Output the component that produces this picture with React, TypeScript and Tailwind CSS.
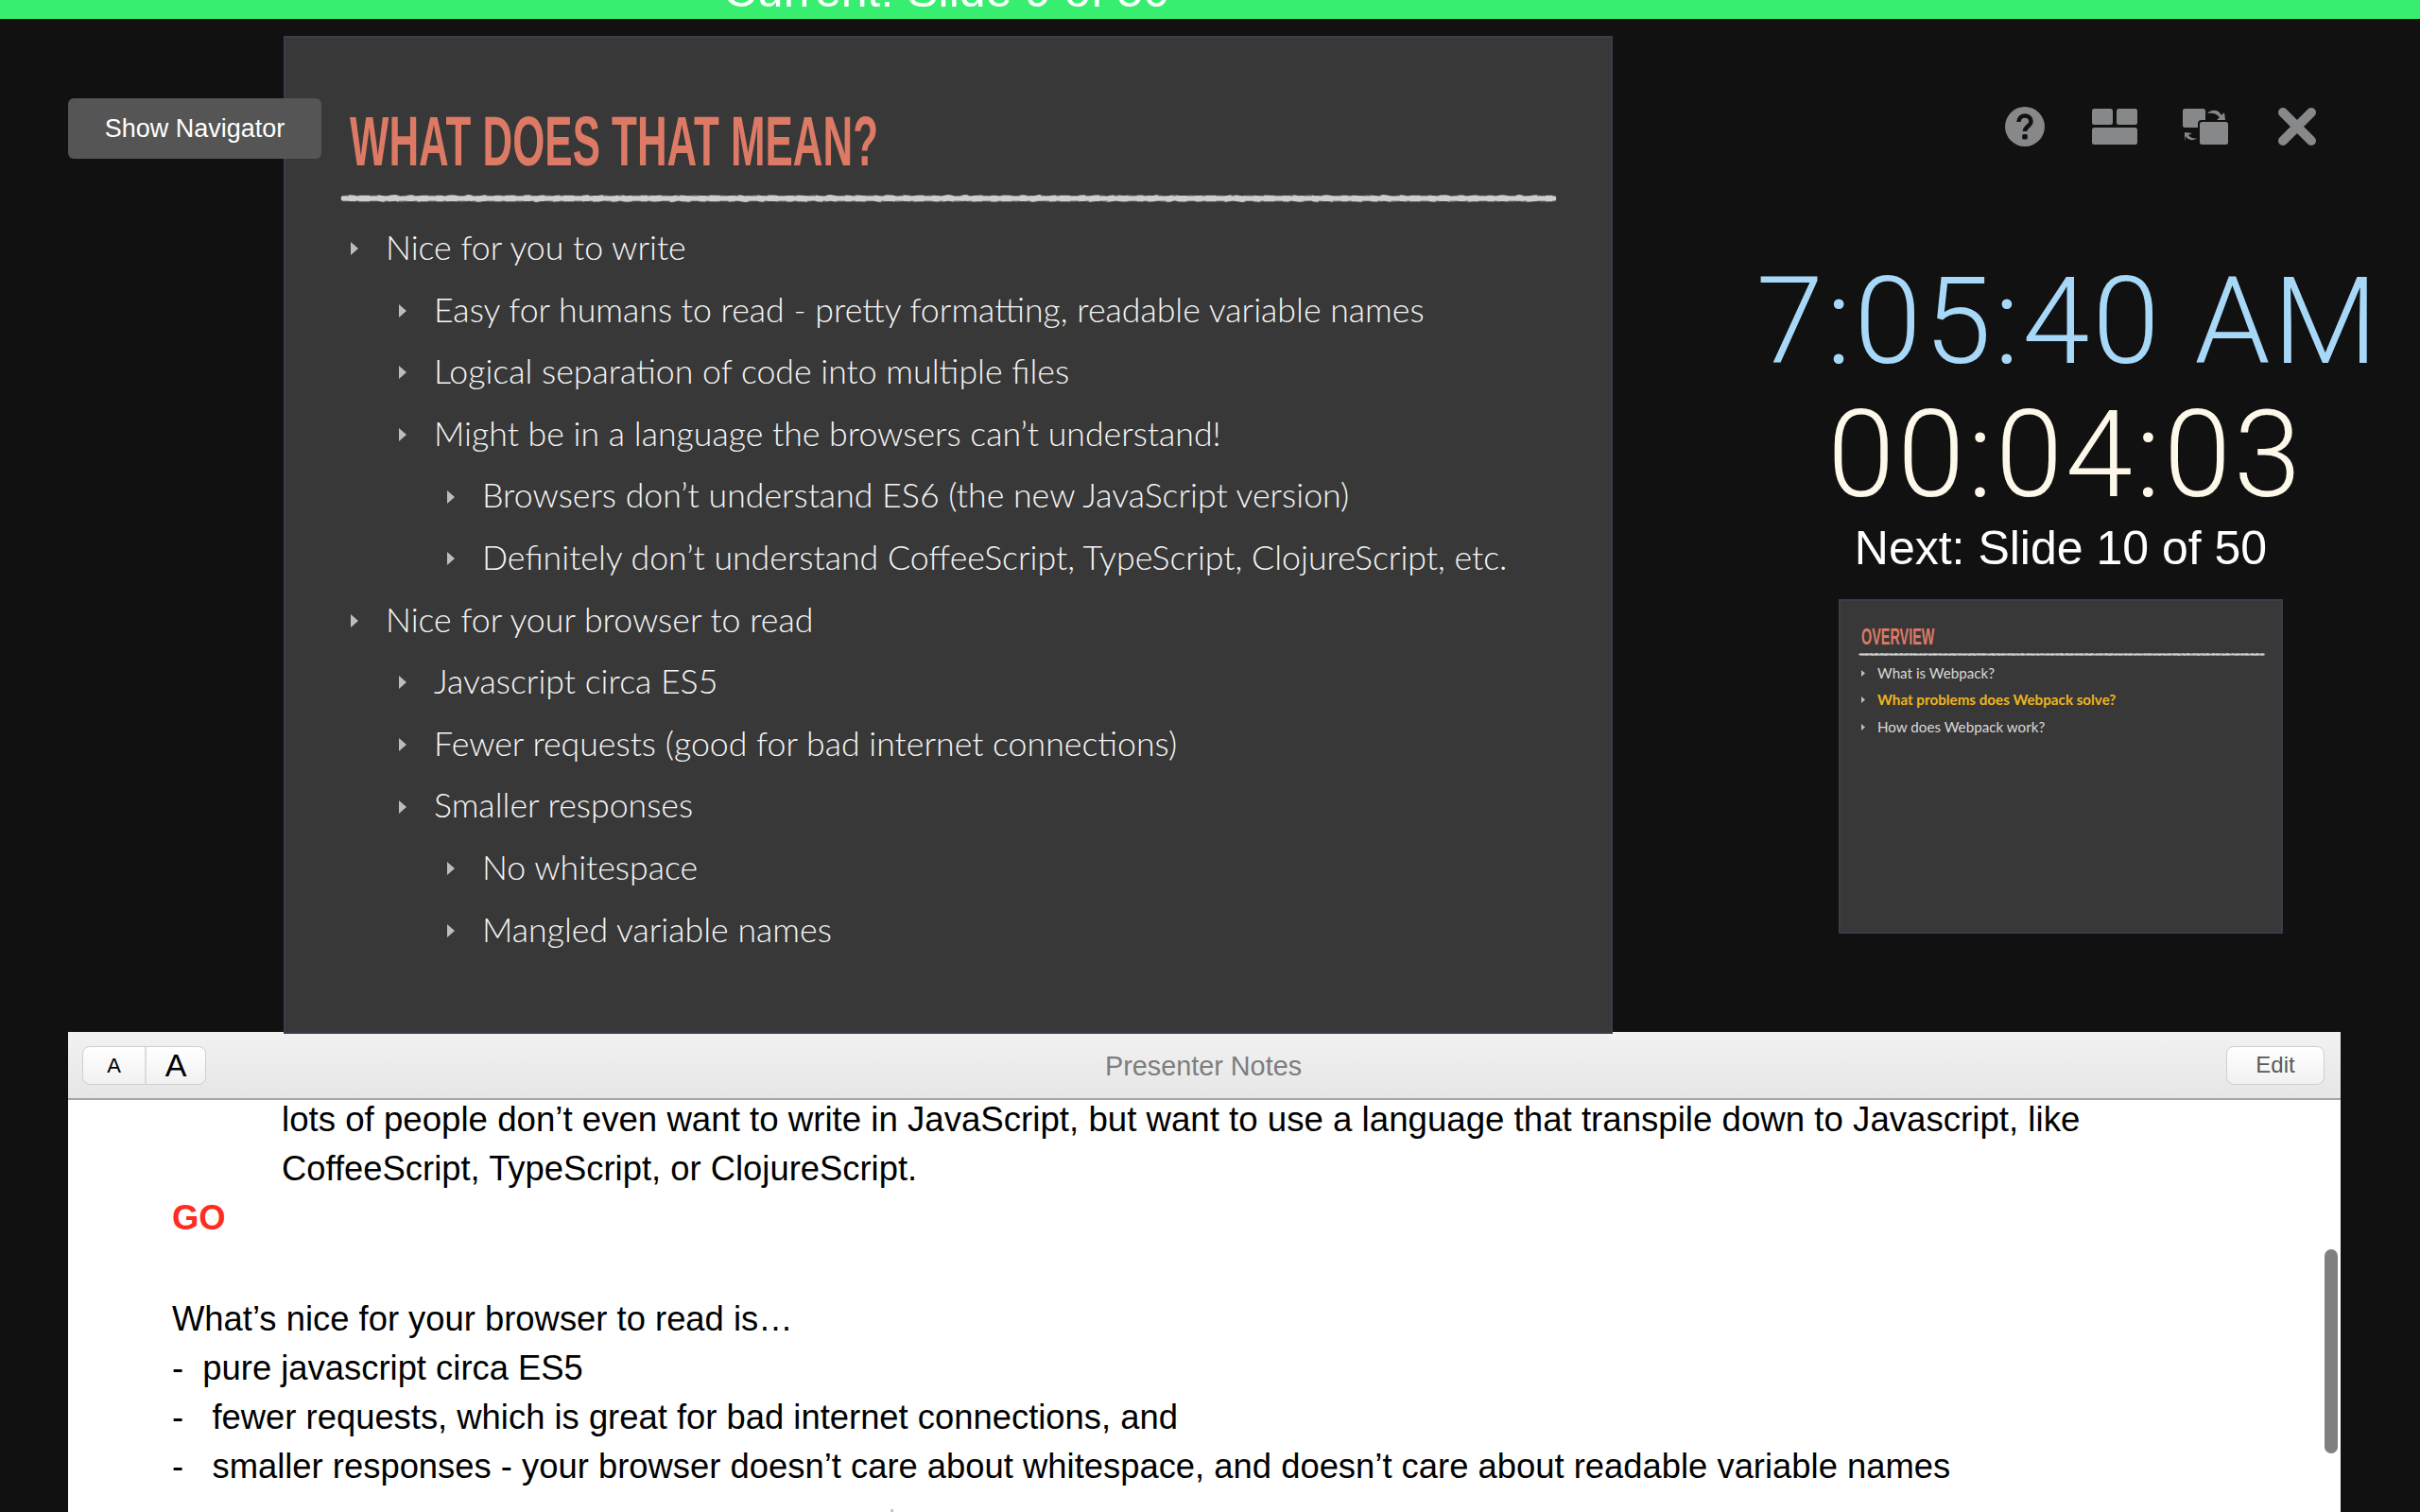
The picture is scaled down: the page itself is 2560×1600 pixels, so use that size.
const bullets: { text: string; level: number }[] = [
  { text: "Nice for you to write", level: 0 },
  { text: "Easy for humans to read - pretty formatting, readable variable names", level: 1 },
  { text: "Logical separation of code into multiple files", level: 1 },
  { text: "Might be in a language the browsers can’t understand!", level: 1 },
  { text: "Browsers don’t understand ES6 (the new JavaScript version)", level: 2 },
  { text: "Definitely don’t understand CoffeeScript, TypeScript, ClojureScript, etc.", level: 2 },
  { text: "Nice for your browser to read", level: 0 },
  { text: "Javascript circa ES5", level: 1 },
  { text: "Fewer requests (good for bad internet connections)", level: 1 },
  { text: "Smaller responses", level: 1 },
  { text: "No whitespace", level: 2 },
  { text: "Mangled variable names", level: 2 },
];

const indent = ["pl-0", "pl-[51px]", "pl-[102px]"];

const Arrow = ({ small }: { small?: boolean }) => (
  <svg width={small ? 4 : 8} height={small ? 7 : 14} viewBox="0 0 8 14" className={small ? "shrink-0" : "shrink-0 mt-[3px]"}>
    <path d="M0 0 L8 7 L0 14 Z" fill="#bdbdbd" />
  </svg>
);

// hand drawn chalk stroke, jitter comes from a couple of sines
const chalkPath = (() => {
  let d = "M4 4";
  for (let x = 10; x < 1290; x += 6) {
    const y = 4 + Math.sin(x * 1.7) * 0.4 + Math.sin(x * 0.31) * 0.3;
    d += ` L${x} ${y.toFixed(2)}`;
  }
  return d;
})();

const ChalkLine = ({ width, height }: { width: number; height: number }) => (
  <svg width={width} height={height} viewBox="0 0 1292 8" preserveAspectRatio="none" className="block">
    <path d={chalkPath} fill="none" stroke="#cdcdcd" strokeWidth="6.5" strokeLinecap="round" />
    <path d="M0 0.8 H1292 M0 7.2 H1292" stroke="#383838" strokeWidth="1" strokeDasharray="9 7 4 11" />
  </svg>
);

const HelpIcon = () => (
  <svg width="42" height="42" viewBox="0 0 42 42">
    <circle cx="21" cy="21" r="21" fill="#87888a" />
    <path d="M14.5 16 C14.5 7.5 27.5 7.5 27.5 15.5 C27.5 20.5 21 20.5 21 26" fill="none" stroke="#111" strokeWidth="4.5" />
    <rect x="18.2" y="29" width="5.6" height="5.6" rx="1.5" fill="#111" />
  </svg>
);

const LayoutIcon = () => (
  <svg width="48" height="38" viewBox="0 0 48 38" fill="#87888a">
    <rect x="0" y="0" width="22" height="17" rx="2.5" />
    <rect x="26" y="0" width="22" height="17" rx="2.5" />
    <rect x="0" y="20" width="48" height="18" rx="2.5" />
  </svg>
);

const SwapIcon = () => (
  <svg width="48" height="38" viewBox="0 0 48 38" fill="#87888a">
    <rect x="0" y="0" width="24" height="20" rx="2.5" />
    <rect x="16" y="12" width="32" height="27" rx="4" fill="#111" />
    <rect x="18" y="14" width="30" height="24" rx="2.5" />
    <path d="M26 5 C31 0 38 1 41 7 L44 4 L45 12 L36 12 L39 9 C36 5 31 4 26 5 Z" />
    <path d="M15 31 C11 35 5 33 3 29 L2 35 L2 25 L10 26 L6 28 C8 31 12 32 15 31 Z" />
  </svg>
);

const CloseIcon = () => (
  <svg width="40" height="40" viewBox="0 0 40 40">
    <path d="M5 5 L35 35 M35 5 L5 35" stroke="#87888a" strokeWidth="10" strokeLinecap="round" />
  </svg>
);

const Slide = () => (
  <div className="relative z-10 w-[1406px] h-[1056px] shrink-0 bg-[#383838] border-2 border-[#3a3d4a] pl-[68px]">
    <div className="h-[84px] mt-[68px] font-['Liberation_Sans',sans-serif] font-bold text-[74px] leading-[84px] text-[#dd7a66] whitespace-nowrap origin-left scale-x-[0.593]">
      WHAT DOES THAT MEAN?
    </div>
    <div className="-ml-[10px] mt-[14px]">
      <ChalkLine width={1287} height={8} />
    </div>
    <ul className="mt-[15px] ml-[1px] font-['Lato',sans-serif] font-light text-[35.7px] text-[#f6f6f6]">
      {bullets.map((b) => (
        <li key={b.text} className={`h-[65.6px] flex items-center whitespace-nowrap ${indent[b.level]}`}>
          <Arrow />
          <span className="ml-[29px]">{b.text}</span>
        </li>
      ))}
    </ul>
  </div>
);

const Thumbnail = () => (
  <div className="w-[470px] h-[354px] border-2 border-[#3a3d4a] bg-[#383838] pl-[22px]">
    <div className="mt-[25px] h-[26px] font-['Liberation_Sans',sans-serif] font-bold text-[24px] leading-[26px] text-[#dd7a66] origin-left scale-x-[0.6]">
      OVERVIEW
    </div>
    <div className="-ml-[3px] mt-[4px]">
      <ChalkLine width={430} height={3} />
    </div>
    <ul className="mt-[4px] font-['Lato',sans-serif] text-[15.2px] text-[#d8d8d8]">
      <li className="h-[28.5px] flex items-center gap-[13px]"><Arrow small />What is Webpack?</li>
      <li className="h-[28.5px] flex items-center gap-[13px] font-bold text-[#edb51e]"><Arrow small />What problems does Webpack solve?</li>
      <li className="h-[28.5px] flex items-center gap-[13px]"><Arrow small />How does Webpack work?</li>
    </ul>
  </div>
);

const Clock = () => (
  <div className="flex-1 flex flex-col items-center min-w-0 font-['Liberation_Sans',sans-serif]">
    <div className="self-end mt-[75px] mr-[110px] flex items-center h-[42px]">
      <HelpIcon />
      <div className="ml-[50px]"><LayoutIcon /></div>
      <div className="ml-[48px]"><SwapIcon /></div>
      <div className="ml-[53px]"><CloseIcon /></div>
    </div>
    <div className="ml-[110px] mt-[113px] font-['Roboto',sans-serif] font-light text-[128px] leading-[145px] tracking-[3px] whitespace-nowrap text-[#a8d8f8]">
      7:05:40 AM
    </div>
    <div className="ml-[104px] font-['Roboto',sans-serif] font-light text-[128px] leading-[136px] tracking-[3px] whitespace-nowrap text-[#fdf8e9]">
      00:04:03
    </div>
    <div className="ml-[94px] text-[50px] leading-[62px] whitespace-nowrap text-white">Next: Slide 10 of 50</div>
    <div className="ml-[94px] mt-[23px]"><Thumbnail /></div>
  </div>
);

const Notes = () => (
  <div className="relative flex-1 ml-[72px] mr-[84px] -mt-[2px] bg-white font-['Liberation_Sans',sans-serif] text-black overflow-hidden">
    <div className="h-[72px] flex items-center pl-[15px] pr-[17px] bg-gradient-to-b from-[#f2f2f2] to-[#e6e6e6] border-b-2 border-[#a6a6a6]">
      <div className="flex-1">
        <div className="flex h-[41px] w-[131px] rounded-[8px] border border-[#cfcfcf] bg-gradient-to-b from-[#ffffff] to-[#f1f1f1]">
          <span className="w-[67px] flex items-center justify-center text-[22px] border-r-2 border-[#dcdcdc]">A</span>
          <span className="flex-1 flex items-center justify-center text-[34px]">A</span>
        </div>
      </div>
      <span className="mt-[3px] text-[28.8px] text-[#7d7d7d]">Presenter Notes</span>
      <div className="flex-1 flex justify-end">
        <span className="h-[41px] w-[104px] flex items-center justify-center rounded-[8px] border border-[#cfcfcf] bg-gradient-to-b from-[#ffffff] to-[#f1f1f1] text-[24px] text-[#5a5a5a]">
          Edit
        </span>
      </div>
    </div>
    <div className="pl-[110px] -mt-[5px] text-[36.4px] leading-[52px] whitespace-nowrap">
      <p className="pl-[116px] text-[36.65px]">lots of people don’t even want to write in JavaScript, but want to use a language that transpile down to Javascript, like</p>
      <p className="pl-[116px]">CoffeeScript, TypeScript, or ClojureScript.</p>
      <p className="font-bold text-[#ff2d1f]">GO</p>
      <p className="h-[55px]" />
      <p>What’s nice for your browser to read is…</p>
      <p>-&nbsp; pure javascript circa ES5</p>
      <p>-&nbsp;&nbsp; fewer requests, which is great for bad internet connections, and</p>
      <p>-&nbsp;&nbsp; smaller responses - your browser doesn’t care about whitespace, and doesn’t care about readable variable names</p>
    </div>
    <div className="absolute right-[3px] top-[230px] w-[14px] h-[216px] rounded-full bg-[#808080]" />
    {/* top of a glyph from the next line, cut by the window */}
    <div className="absolute left-[870px] bottom-0 w-[3px] h-[3px] bg-[#c8c8c8]" />
  </div>
);

export default function App() {
  return (
    <div className="relative w-[2560px] h-[1600px] overflow-hidden bg-[#111111] flex flex-col">
      <div className="h-[20px] shrink-0 bg-[#38ee70] overflow-hidden flex justify-center">
        <div className="ml-[-558px] -mt-[41px] font-['Liberation_Sans',sans-serif] text-[50px] leading-[62px] text-white whitespace-nowrap">
          Current: Slide 9 of 50
        </div>
      </div>
      <div className="flex mt-[18px] pl-[300px] h-[1056px] shrink-0">
        <Slide />
        <Clock />
      </div>
      <button className="absolute z-20 left-[72px] top-[104px] w-[268px] h-[64px] rounded-[6px] bg-[#555555] text-white text-[27px] font-['Liberation_Sans',sans-serif]">
        Show Navigator
      </button>
      <Notes />
    </div>
  );
}
